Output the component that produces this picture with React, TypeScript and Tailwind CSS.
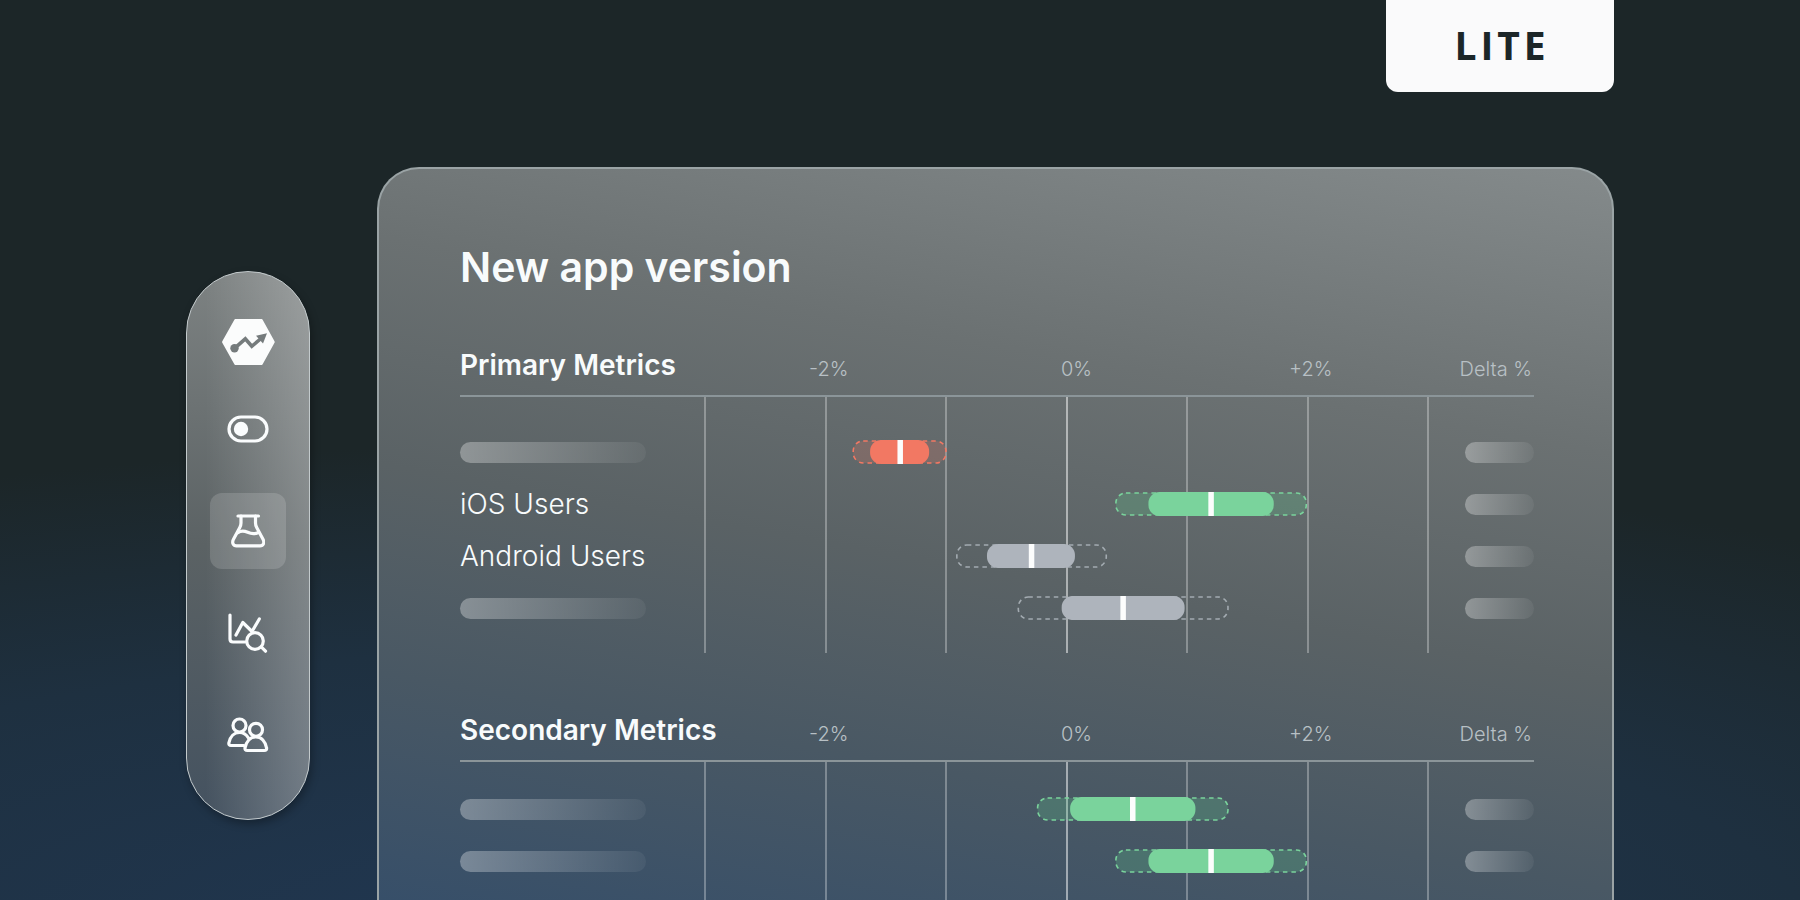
import { useState } from "react";
import clsx from "clsx";

type Tone = "red" | "green" | "gray";

interface Metric {
  id: string;
  label?: string;
  tone: Tone;
  range: [number, number];
  interval: [number, number];
  value: number;
}

const primaryMetrics: Metric[] = [
  {
    id: "p1",
    tone: "red",
    range: [-1.77, -1.0],
    interval: [-1.63, -1.14],
    value: -1.38,
  },
  {
    id: "p2",
    label: "iOS Users",
    tone: "green",
    range: [0.41, 1.99],
    interval: [0.68, 1.72],
    value: 1.2,
  },
  {
    id: "p3",
    label: "Android Users",
    tone: "gray",
    range: [-0.91, 0.33],
    interval: [-0.66, 0.07],
    value: -0.29,
  },
  {
    id: "p4",
    tone: "gray",
    range: [-0.4, 1.34],
    interval: [-0.04, 0.98],
    value: 0.47,
  },
];

const secondaryMetrics: Metric[] = [
  {
    id: "s1",
    tone: "green",
    range: [-0.24, 1.34],
    interval: [0.03, 1.07],
    value: 0.55,
  },
  {
    id: "s2",
    tone: "green",
    range: [0.41, 1.99],
    interval: [0.68, 1.72],
    value: 1.2,
  },
];

const tones: Record<Tone, { bar: string; range: string }> = {
  red: { bar: "fill-[#f27863]", range: "fill-[#f27863]/20 stroke-[#f27863]" },
  green: { bar: "fill-[#7ad39c]", range: "fill-[#5fc98a]/25 stroke-[#7ad39c]" },
  gray: { bar: "fill-[#aeb4bc]", range: "fill-transparent stroke-[#a3abb1]" },
};

// The axis runs from -3% to +3%
const toPercent = (value: number) => `${((value + 3) / 6) * 100}%`;
const toWidth = ([from, to]: [number, number]) => `${((to - from) / 6) * 100}%`;

const Logo = () => (
  <svg width="53" height="46" viewBox="0 0 53 46" aria-hidden="true">
    <path
      d="M13.4 0h26.2a1 1 0 0 1 .9.5l12 21.7a1.5 1.5 0 0 1 0 1.5l-12 21.8a1 1 0 0 1-.9.5H13.4a1 1 0 0 1-.9-.5L.3 23.7a1.5 1.5 0 0 1 0-1.5L12.5.5a1 1 0 0 1 .9-.5z"
      fill="#fbfcfc"
    />
    <circle cx="12.5" cy="29.3" r="4.2" fill="#757b7c" />
    <path
      d="M12.5 29.3 23.3 19.8 29.8 27.3 39 19.5"
      fill="none"
      stroke="#757b7c"
      strokeWidth="3.6"
    />
    <path d="M45 14.3 34 16.8 41 24.5z" fill="#757b7c" />
  </svg>
);

const iconProps = {
  fill: "none",
  stroke: "currentColor",
  strokeWidth: 3.2,
  strokeLinecap: "round" as const,
  strokeLinejoin: "round" as const,
  "aria-hidden": true,
};

const ToggleIcon = () => (
  <svg width="42" height="28" viewBox="0 0 42 28" {...iconProps}>
    <rect x="2" y="2" width="38" height="24" rx="12" />
    <circle cx="14" cy="14" r="7.2" fill="currentColor" stroke="none" />
  </svg>
);

const FlaskIcon = () => (
  <svg width="34" height="34" viewBox="0 0 34 34" {...iconProps}>
    <path d="M7 2h20.5" />
    <path d="M10 2v7c0 1.8-.3 2.8-1.2 4.5L2.5 25.3c-1.8 3.4-.4 6.5 3 6.5h23.5c3.4 0 4.8-3.1 3-6.5l-6.3-11.8c-.9-1.7-1.2-2.7-1.2-4.5V2" />
    <path d="M6.8 18.8c3.5-2.8 6.2-2.2 9.9-.5 3.7 1.7 7.3 1.8 10.8.2" />
  </svg>
);

const ChartIcon = () => (
  <svg width="40" height="40" viewBox="0 0 40 40" {...iconProps}>
    <path d="M2 2v24c0 2 1 3 3 3h12" />
    <path d="M8 22 14.8 9.5 24 18.5 31.3 6" />
    <circle cx="27" cy="28" r="8.3" />
    <path d="m33.5 34.2 4 4" />
  </svg>
);

const UsersIcon = () => (
  <svg width="42" height="36" viewBox="0 0 42 36" {...iconProps}>
    <circle cx="12.5" cy="8.5" r="6.5" />
    <circle cx="29" cy="12.8" r="6.5" />
    <path d="M17 28.5H4c-1.6 0-2.4-1.2-2.1-2.7 1.2-6 5.2-10.3 10.6-10.3 4 0 7 2.2 8.8 5.3" />
    <path d="M20.4 33.5h16.8c1.9 0 2.7-1.3 2.3-2.8-1.2-6-5-10.9-10.7-10.9S19.3 24.7 18.1 30.7c-.4 1.5.4 2.8 2.3 2.8z" />
  </svg>
);

const navItems = [
  { id: "features", label: "Feature flags", Icon: ToggleIcon },
  { id: "experiments", label: "Experiments", Icon: FlaskIcon },
  { id: "analysis", label: "Analysis", Icon: ChartIcon },
  { id: "users", label: "Users", Icon: UsersIcon },
];

const Sidebar = () => {
  const [active, setActive] = useState("experiments");

  return (
    <nav className="mt-[104px] flex w-[124px] shrink-0 flex-col items-center gap-[26px] self-start rounded-full border border-[#c3cacc] bg-[linear-gradient(to_right,rgba(255,255,255,0)_15%,rgba(255,255,255,0.24)),linear-gradient(to_bottom,#7d8282,#5b6264_50%,#445260)] pt-[47px] pb-[46px] text-[#fafcfd] shadow-[2px_4px_8px_rgba(0,0,0,0.3)]">
      <Logo />
      {navItems.map(({ id, label, Icon }) => (
        <button
          key={id}
          type="button"
          aria-label={label}
          onClick={() => setActive(id)}
          className={clsx(
            "flex size-[76px] items-center justify-center rounded-xl",
            active === id && "bg-white/15"
          )}
        >
          <Icon />
        </button>
      ))}
    </nav>
  );
};

const Placeholder = ({ className }: { className: string }) => (
  <span
    className={clsx(
      "block h-[21px] rounded-full bg-linear-to-r from-white/32 to-white/5",
      className
    )}
  />
);

const IntervalBar = ({ metric }: { metric: Metric }) => {
  const { tone, range, interval, value } = metric;

  return (
    <svg className="block h-6 w-full overflow-visible" aria-hidden="true">
      <rect
        x={toPercent(range[0])}
        y="1"
        width={toWidth(range)}
        height="22"
        rx="10"
        strokeWidth="1.6"
        strokeDasharray="4.5 4"
        className={tones[tone].range}
      />
      <rect
        x={toPercent(interval[0])}
        y="0"
        width={toWidth(interval)}
        height="24"
        rx="11"
        className={tones[tone].bar}
      />
      <line
        x1={toPercent(value)}
        x2={toPercent(value)}
        y1="0"
        y2="24"
        strokeWidth="5.5"
        className="stroke-[#fcfdfd]"
      />
    </svg>
  );
};

const GridLines = () => (
  <div className="absolute top-0 right-[105px] bottom-0 left-[244px] flex justify-between">
    {[-3, -2, -1, 0, 1, 2, 3].map((tick) => (
      <span
        key={tick}
        className={clsx("w-0.5", tick === 0 ? "bg-white/50" : "bg-white/30")}
      />
    ))}
  </div>
);

interface MetricsSectionProps {
  title: string;
  metrics: Metric[];
  className?: string;
  bodyClassName?: string;
}

const MetricsSection = ({
  title,
  metrics,
  className,
  bodyClassName,
}: MetricsSectionProps) => (
  <section className={clsx("relative", className)}>
    <div className="absolute inset-x-0 top-16 bottom-0">
      <GridLines />
    </div>
    <table className="relative w-full table-fixed border-collapse text-left">
      <colgroup>
        <col className="w-[245px]" />
        <col />
        <col className="w-[106px]" />
      </colgroup>
      <thead>
        <tr className="h-16 border-b-2 border-[#8b9599]">
          <th className="pt-4 align-top text-[28px] leading-[34px] font-semibold whitespace-nowrap">
            {title}
          </th>
          <th className="pt-5 align-top text-[20px] leading-[34px] font-light text-[#b8c0c5]">
            <div className="ml-[104px] grid grid-cols-[252fr_228fr_139fr]">
              <span>-2%</span>
              <span>0%</span>
              <span>+2%</span>
            </div>
          </th>
          <th className="pt-5 pr-0.5 text-right align-top text-[20px] leading-[34px] font-light whitespace-nowrap text-[#b8c0c5]">
            Delta %
          </th>
        </tr>
      </thead>
      <tbody>
        <tr aria-hidden="true">
          <td className={bodyClassName} colSpan={3} />
        </tr>
        {metrics.map((metric) => (
          <tr key={metric.id} className="h-[52px]">
            <th
              scope="row"
              className="p-0 text-[28px] leading-[34px] font-light whitespace-nowrap"
            >
              {metric.label ?? <Placeholder className="w-[186px]" />}
            </th>
            <td className="p-0">
              <IntervalBar metric={metric} />
            </td>
            <td className="p-0">
              <Placeholder className="ml-auto w-[69px]" />
            </td>
          </tr>
        ))}
      </tbody>
    </table>
  </section>
);

const App = () => {
  return (
    <div className="flex min-h-screen flex-col bg-[radial-gradient(105%_57%_at_38%_106%,#213854,#1e3040_60%,#1c2628)] px-[186px] font-['Inter',sans-serif] text-[#f8fbfc]">
      <header className="flex justify-end">
        <div className="flex h-[92px] w-[228px] items-center justify-center rounded-b-xl bg-[#fafafb] pb-0.5 pl-1 font-['Open_Sans',sans-serif] text-[39px] font-bold tracking-widest text-[#1c2628]">
          LITE
        </div>
      </header>

      <div className="mt-[75px] flex flex-1 gap-[67px]">
        <Sidebar />

        <main className="flex min-w-0 flex-1 flex-col rounded-t-[42px] border-2 border-b-0 border-[#9aa3a5] bg-[linear-gradient(190deg,#848a8b_0%,#6b7172_30%,#5a6265_54%,#495864_76%,#374f69_100%)] pt-[72px] pr-[78px] pl-[81px]">
          <h1 className="text-[41px] leading-[52px] font-semibold">
            New app version
          </h1>
          <MetricsSection
            title="Primary Metrics"
            metrics={primaryMetrics}
            className="mt-[39px] pb-[19px]"
            bodyClassName="h-[30px]"
          />
          <MetricsSection
            title="Secondary Metrics"
            metrics={secondaryMetrics}
            className="mt-11 flex-1"
            bodyClassName="h-[22px]"
          />
        </main>
      </div>
    </div>
  );
};

export default App;
